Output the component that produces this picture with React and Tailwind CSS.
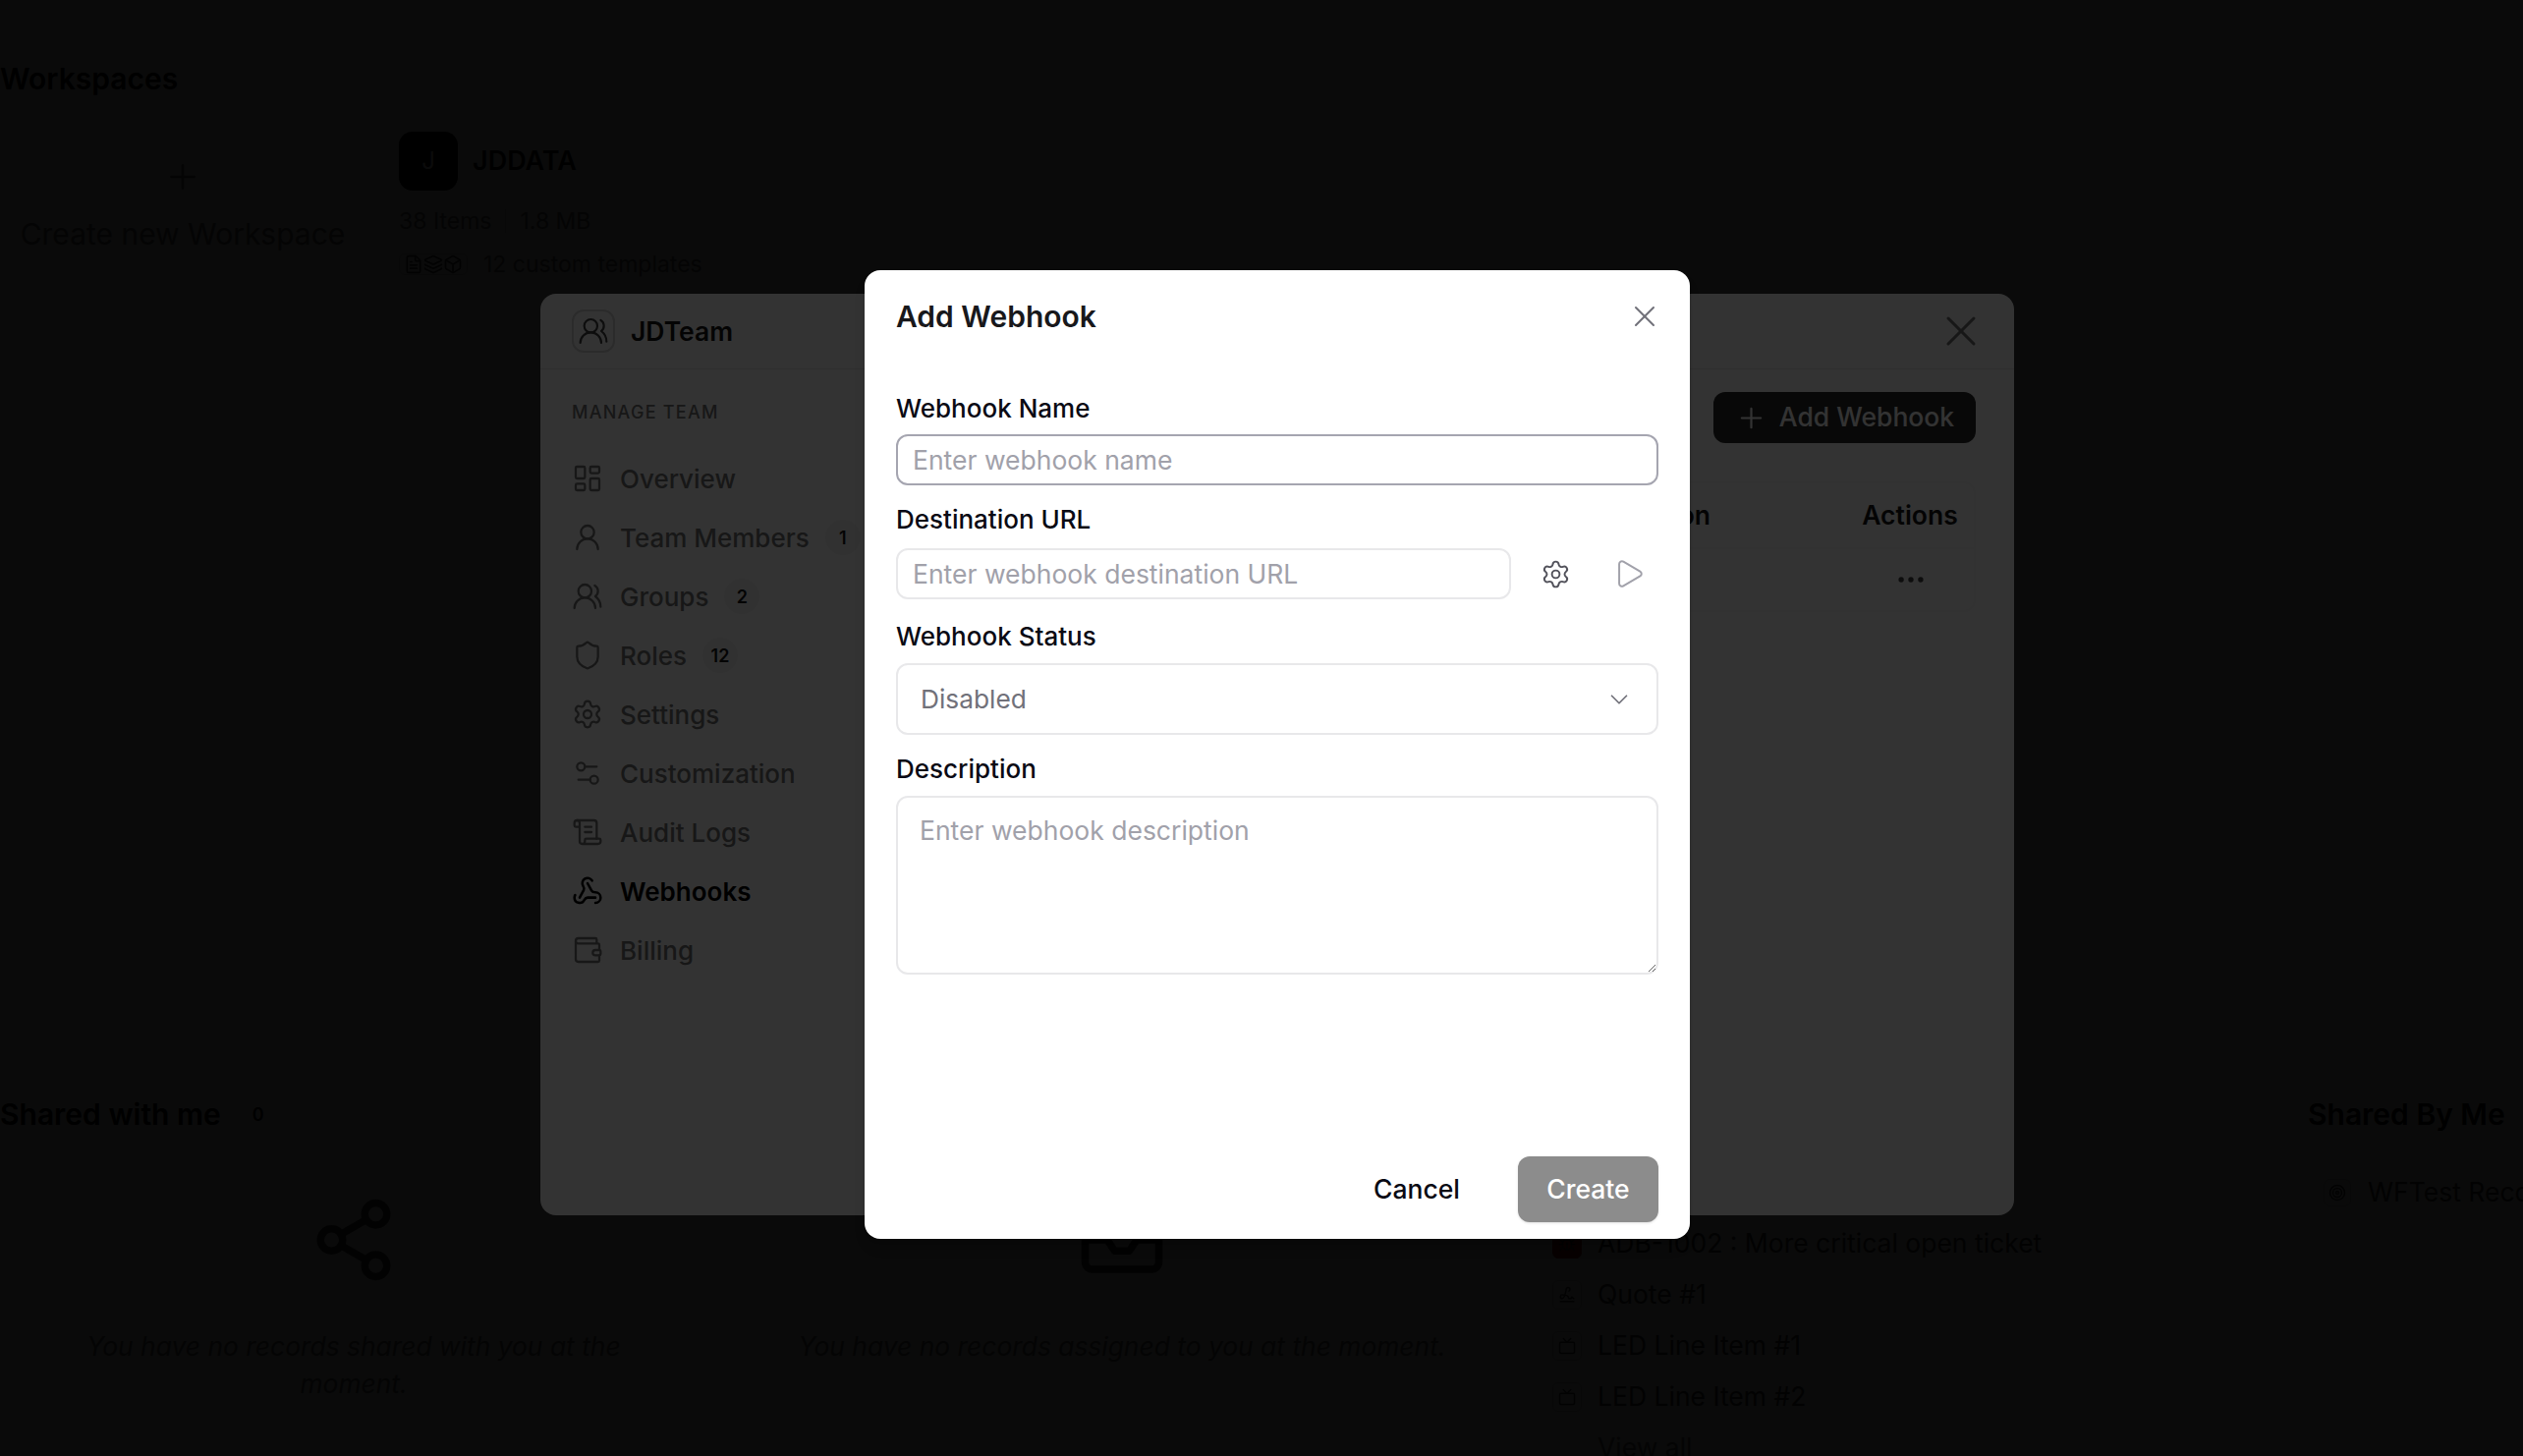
import React from "react";
import {
  Plus, X, Share2, Inbox, Bug, Signature, Tv, Target, UsersRound, UserRound, LayoutDashboard,
  Shield, Settings, Settings2, ScrollText, Webhook, Wallet, Ellipsis, Play, ChevronDown, FileText, Box, Layers,
} from "lucide-react";

const NAV = [
  { label: "Overview", Icon: LayoutDashboard },
  { label: "Team Members", Icon: UserRound, badge: "1" },
  { label: "Groups", Icon: UsersRound, badge: "2" },
  { label: "Roles", Icon: Shield, badge: "12" },
  { label: "Settings", Icon: Settings },
  { label: "Customization", Icon: Settings2 },
  { label: "Audit Logs", Icon: ScrollText },
  { label: "Webhooks", Icon: Webhook, active: true },
  { label: "Billing", Icon: Wallet },
];

const RECENT = [
  { label: "ADB-1002 : More critical open ticket", Icon: Bug, red: true },
  { label: "Quote #1", Icon: Signature },
  { label: "LED Line Item #1", Icon: Tv },
  { label: "LED Line Item #2", Icon: Tv },
];

function BackgroundPage() {
  return (
    <div className="flex h-full flex-col">
      <div className="flex h-[5px] items-end overflow-hidden">
        <div className="flex shrink-0 items-center gap-2 text-[26px] leading-[32px] font-medium text-[#404040]">
          JD Team <ChevronDown size={22} />
        </div>
      </div>
      <h1 className="mt-[60px] h-[40px] text-[30px] leading-[40px] font-semibold text-black">Workspaces</h1>
      <div className="mt-[34px] flex">
        <div className="flex w-[372px] shrink-0 flex-col items-center pt-[26px] text-[#737373]">
          <Plus size={40} strokeWidth={1.5} />
          <div className="mt-[18px] text-[30px] leading-[40px] whitespace-nowrap">Create new Workspace</div>
        </div>
        <div className="ml-[34px] flex flex-col">
          <div className="flex items-center">
            <div className="flex h-[60px] w-[60px] items-center justify-center rounded-[14px] bg-black text-[24px] text-white">J</div>
            <div className="ml-[15px] text-[27px] font-semibold text-[#171717]">JDDATA</div>
          </div>
          <div className="mt-[16px] flex h-[30px] items-center text-[23px] text-[#737373]">
            <span>38 Items</span>
            <span className="mx-[14px] h-[24px] w-px bg-[#d4d4d4]" />
            <span>1.8 MB</span>
          </div>
          <div className="mt-[14px] flex h-[30px] items-center text-[23px] text-[#737373]">
            <div className="flex items-center rounded-md border border-[#d4d4d4] px-1 text-[#404040]">
              <FileText size={20} /><Layers size={20} /><Box size={20} />
            </div>
            <span className="ml-[16px]">12 custom templates</span>
          </div>
        </div>
      </div>

      <div className="mt-[830px] flex">
        <div className="flex w-[720px] shrink-0 flex-col items-center">
          <div className="flex h-[40px] w-full items-center">
            <h2 className="text-[30px] leading-[40px] font-semibold text-black">Shared with me</h2>
            <span className="ml-[32px] text-[18px] font-semibold text-black">0</span>
          </div>
          <Share2 size={90} className="mt-[63px] text-[#404040]" />
          <p className="mt-[44px] w-[600px] text-center text-[26.4px] leading-[38px] text-[#737373] italic">
            You have no records shared with you at the moment.
          </p>
        </div>
        <div className="ml-[62px] flex w-[720px] shrink-0 flex-col items-center pt-[103px]">
          <Inbox size={90} className="text-[#404040]" />
          <p className="mt-[44px] text-center text-[26.4px] leading-[38px] whitespace-nowrap text-[#737373] italic">
            You have no records assigned to you at the moment.
          </p>
        </div>
        <div className="ml-[78px] flex w-[769px] shrink-0 flex-col pt-[126px]">
          {RECENT.map(({ label, Icon, red }) => (
            <div key={label} className="flex h-[52px] items-center">
              <span className={`flex h-[30px] w-[30px] items-center justify-center rounded-md border ${red ? "border-[#b91c1c] bg-[#b91c1c]" : "border-[#d4d4d4]"}`}>
                <Icon size={18} className="text-[#404040]" />
              </span>
              <span className="ml-[16px] text-[26.5px] whitespace-nowrap text-[#404040]">{label}</span>
            </div>
          ))}
          <div className="ml-[46px] flex h-[52px] items-center text-[26.5px] text-[#737373]">View all</div>
        </div>
        <div className="flex shrink-0 flex-col">
          <h2 className="text-[30px] leading-[40px] font-semibold whitespace-nowrap text-black">Shared By Me</h2>
          <div className="mt-[40px] ml-[16px] flex items-center">
            <span className="flex h-[28px] w-[28px] items-center justify-center rounded-md border border-[#d4d4d4]">
              <Target size={18} className="text-[#404040]" />
            </span>
            <span className="ml-[17px] text-[26.5px] whitespace-nowrap text-[#404040]">WFTest Record</span>
          </div>
        </div>
      </div>
    </div>
  );
}

function TeamPanel() {
  return (
    <div className="flex h-[938px] w-[1500px] flex-col overflow-hidden rounded-2xl bg-white">
      <div className="flex h-[77px] shrink-0 items-center justify-between border-b border-[#ececec] pr-[28px] pl-[32px]">
        <div className="flex items-center">
          <span className="flex h-[44px] w-[44px] items-center justify-center rounded-xl border-2 border-[#d4d4d4] text-[#404040]">
            <UsersRound size={32} strokeWidth={1.6} />
          </span>
          <span className="ml-[16px] pt-[2px] text-[26.5px] font-semibold text-[#171717]">JDTeam</span>
        </div>
        <X size={52} strokeWidth={1.4} className="text-[#737373]" />
      </div>
      <div className="flex flex-1">
        <div className="flex w-[370px] shrink-0 flex-col pl-[32px]">
          <div className="mt-[31px] h-[26px] text-[18px] leading-[26px] font-medium tracking-[0.07em] text-[#737373]">MANAGE TEAM</div>
          <nav className="mt-[24px] flex flex-col">
            {NAV.map(({ label, Icon, badge, active }) => (
              <div key={label} className={`flex h-[60px] items-center ${active ? "text-black" : "text-[#737373]"}`}>
                <Icon size={32} strokeWidth={active ? 1.9 : 1.7} className="shrink-0" />
                <span className={`ml-[17px] text-[26px] whitespace-nowrap ${active ? "font-semibold" : "font-medium"}`}>{label}</span>
                {badge && (
                  <span className="ml-[16px] flex h-[36px] min-w-[36px] items-center justify-center rounded-full bg-[#f5f5f5] px-1 text-[18px] font-semibold text-[#171717]">
                    {badge}
                  </span>
                )}
              </div>
            ))}
          </nav>
        </div>
        <div className="flex flex-1 flex-col pr-[39px]">
          <button className="mt-[23px] flex h-[52px] w-[267px] items-center justify-center gap-[12px] self-end rounded-xl bg-[#2a2a2a] text-[26.5px] font-medium text-white">
            <Plus size={33} strokeWidth={1.6} />
            Add Webhook
          </button>
          <div className="mt-[39px] flex flex-col rounded-xl border-2 border-[#f7f7f7]">
            <div className="flex h-[67px] items-center justify-end border-b-2 border-[#f7f7f7] text-[26.5px] font-semibold text-[#171717]">
              <span>Description</span>
              <span className="ml-[138px] w-[130px] text-center">Actions</span>
            </div>
            <div className="flex h-[62px] items-center justify-end text-[#404040]">
              <span className="flex w-[128px] justify-center"><Ellipsis size={34} strokeWidth={1.8} /></span>
            </div>
          </div>
        </div>
      </div>
    </div>
  );
}

const labelCls = "h-[32px] text-[26px] leading-[32px] font-medium text-[#0a0a14]";
const fieldCls = "rounded-xl bg-white text-[26.5px] outline-none placeholder:text-[#a1a1aa]";

function WebhookDialog() {
  return (
    <div className="flex h-[986px] w-[840px] flex-col rounded-2xl bg-white px-[32px] pt-[27px] pb-[17px] shadow-lg">
      <div className="flex h-[40px] items-center justify-between">
        <h2 className="text-[30px] leading-[40px] font-semibold text-[#18181b]">Add Webhook</h2>
        <X size={36} strokeWidth={1.35} className="-mr-[4px] text-[#71717a]" />
      </div>

      <div className={`mt-[58px] ${labelCls}`}>Webhook Name</div>
      <input placeholder="Enter webhook name" className={`mt-[10px] h-[52px] w-full border-2 border-[#a5a5b0] px-[15px] ${fieldCls}`} />

      <div className={`mt-[19px] ${labelCls}`}>Destination URL</div>
      <div className="mt-[13px] flex h-[52px] items-center">
        <input placeholder="Enter webhook destination URL" className={`h-full w-[626px] shrink-0 border-2 border-[#e8e8ea] px-[15px] ${fieldCls}`} />
        <Settings size={31} strokeWidth={1.5} className="ml-[30px] shrink-0 text-[#52525b]" />
        <Play size={34} strokeWidth={1.4} className="ml-[42px] shrink-0 text-[#a1a1aa]" />
      </div>

      <div className={`mt-[22px] ${labelCls}`}>Webhook Status</div>
      <div className="mt-[11px] flex h-[73px] items-center justify-between rounded-xl border-2 border-[#e8e8ea] pr-[23px] pl-[23px] text-[26.3px] text-[#71717a]">
        Disabled
        <ChevronDown size={30} strokeWidth={1.4} className="text-[#71717a]" />
      </div>

      <div className={`mt-[19px] ${labelCls}`}>Description</div>
      <textarea placeholder="Enter webhook description" className={`mt-[11px] h-[182px] w-full resize-y border-2 border-[#e8e8ea] px-[22px] pt-[17px] leading-[32px] ${fieldCls}`} />

      <div className="mt-auto flex items-center justify-end">
        <button className="text-[26.5px] font-medium text-[#0a0a14]">Cancel</button>
        <button className="ml-[59px] h-[67px] w-[143px] rounded-xl bg-[#8c8c8c] text-[26.5px] font-medium text-white shadow-sm">Create</button>
      </div>
    </div>
  );
}

export default function App() {
  return (
    <div className="relative h-[1482px] w-[2568px] overflow-hidden bg-white font-['Inter',sans-serif]">
      <BackgroundPage />
      <div className="absolute inset-0 flex items-center justify-center bg-black/80 pt-[54px] pl-[32px]">
        <TeamPanel />
      </div>
      <div className="absolute inset-0 flex items-center justify-center bg-black/80 pt-[54px] pl-[32px]">
        <WebhookDialog />
      </div>
    </div>
  );
}
